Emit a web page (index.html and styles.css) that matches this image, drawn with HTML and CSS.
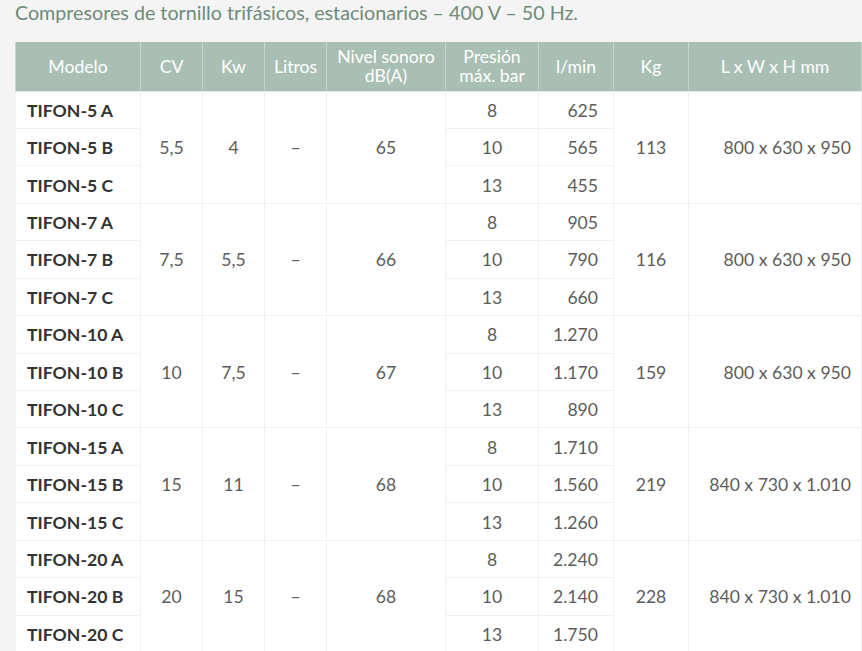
FILE: index.html
```html
<!DOCTYPE html>
<html lang="es">
<head>
<meta charset="utf-8">
<title>Compresores de tornillo</title>
<link rel="stylesheet" href="styles.css">
</head>
<body>
<div class="page">
  <h2 class="title">Compresores de tornillo trifásicos, estacionarios – 400 V – 50 Hz.</h2>
  <table class="specs">
    <colgroup>
      <col class="c-model"><col class="c-cv"><col class="c-kw"><col class="c-lit"><col class="c-db"><col class="c-bar"><col class="c-lmin"><col class="c-kg"><col class="c-dim">
    </colgroup>
    <thead>
      <tr>
        <th>Modelo</th><th>CV</th><th>Kw</th><th>Litros</th><th>Nivel sonoro<br>dB(A)</th><th>Presión<br>máx. bar</th><th>l/min</th><th>Kg</th><th>L x W x H mm</th>
      </tr>
    </thead>
    <tbody>
      <tr><td class="model">TIFON-5 A</td><td rowspan="3">5,5</td><td rowspan="3">4</td><td rowspan="3">–</td><td rowspan="3">65</td><td>8</td><td class="num">625</td><td rowspan="3">113</td><td rowspan="3" class="dim">800 x 630 x 950</td></tr>
      <tr><td class="model">TIFON-5 B</td><td>10</td><td class="num">565</td></tr>
      <tr><td class="model">TIFON-5 C</td><td>13</td><td class="num">455</td></tr>

      <tr><td class="model">TIFON-7 A</td><td rowspan="3">7,5</td><td rowspan="3">5,5</td><td rowspan="3">–</td><td rowspan="3">66</td><td>8</td><td class="num">905</td><td rowspan="3">116</td><td rowspan="3" class="dim">800 x 630 x 950</td></tr>
      <tr><td class="model">TIFON-7 B</td><td>10</td><td class="num">790</td></tr>
      <tr><td class="model">TIFON-7 C</td><td>13</td><td class="num">660</td></tr>

      <tr><td class="model">TIFON-10 A</td><td rowspan="3">10</td><td rowspan="3">7,5</td><td rowspan="3">–</td><td rowspan="3">67</td><td>8</td><td class="num">1.270</td><td rowspan="3">159</td><td rowspan="3" class="dim">800 x 630 x 950</td></tr>
      <tr><td class="model">TIFON-10 B</td><td>10</td><td class="num">1.170</td></tr>
      <tr><td class="model">TIFON-10 C</td><td>13</td><td class="num">890</td></tr>

      <tr><td class="model">TIFON-15 A</td><td rowspan="3">15</td><td rowspan="3">11</td><td rowspan="3">–</td><td rowspan="3">68</td><td>8</td><td class="num">1.710</td><td rowspan="3">219</td><td rowspan="3" class="dim">840 x 730 x 1.010</td></tr>
      <tr><td class="model">TIFON-15 B</td><td>10</td><td class="num">1.560</td></tr>
      <tr><td class="model">TIFON-15 C</td><td>13</td><td class="num">1.260</td></tr>

      <tr><td class="model">TIFON-20 A</td><td rowspan="3">20</td><td rowspan="3">15</td><td rowspan="3">–</td><td rowspan="3">68</td><td>8</td><td class="num">2.240</td><td rowspan="3">228</td><td rowspan="3" class="dim">840 x 730 x 1.010</td></tr>
      <tr><td class="model">TIFON-20 B</td><td>10</td><td class="num">2.140</td></tr>
      <tr><td class="model">TIFON-20 C</td><td>13</td><td class="num">1.750</td></tr>
    </tbody>
  </table>
</div>
</body>
</html>
```

FILE: styles.css
```css
html, body {
  margin: 0;
  padding: 0;
  background: #f4f4f4;
}

.page {
  padding: 1px 0 0 15px;
  font-family: Lato, "Open Sans", "Liberation Sans", sans-serif;
}

.title {
  margin: 0 0 17px 0;
  font-size: 19.7px;
  line-height: 24px;
  font-weight: 400;
  color: #6e8b7b;
}

.specs {
  border-collapse: collapse;
  table-layout: fixed;
  width: 846px;
  background: #ffffff;
  font-size: 17.6px;
}

.c-model { width: 125px; }
.c-cv { width: 62px; }
.c-kw { width: 62px; }
.c-lit { width: 62px; }
.c-db { width: 119px; }
.c-bar { width: 93px; }
.c-lmin { width: 75px; }
.c-kg { width: 75px; }
.c-dim { width: 173px; }

.specs th {
  background: #a9bfb3;
  color: #ffffff;
  font-weight: 400;
  font-size: 17.6px;
  line-height: 19px;
  height: 49px;
  padding: 0 2px;
  box-sizing: border-box;
  text-align: center;
  vertical-align: middle;
  border-left: 1px solid #c6d5cd;
  border-right: 1px solid #c6d5cd;
  border-bottom: 1px solid #dfe7e2;
}

.specs td {
  height: 37.45px;
  box-sizing: border-box;
  padding: 2px 6px 0 6px;
  line-height: 20px;
  color: #5c5c5c;
  text-align: center;
  vertical-align: middle;
  border: 1px solid #f1f1f1;
}

.specs td.model {
  text-align: left;
  padding-left: 11px;
  font-weight: 700;
  color: #333333;
}

.specs td.num {
  text-align: right;
  padding-right: 15px;
}

.specs td.dim {
  text-align: right;
  padding-right: 10px;
}
```
